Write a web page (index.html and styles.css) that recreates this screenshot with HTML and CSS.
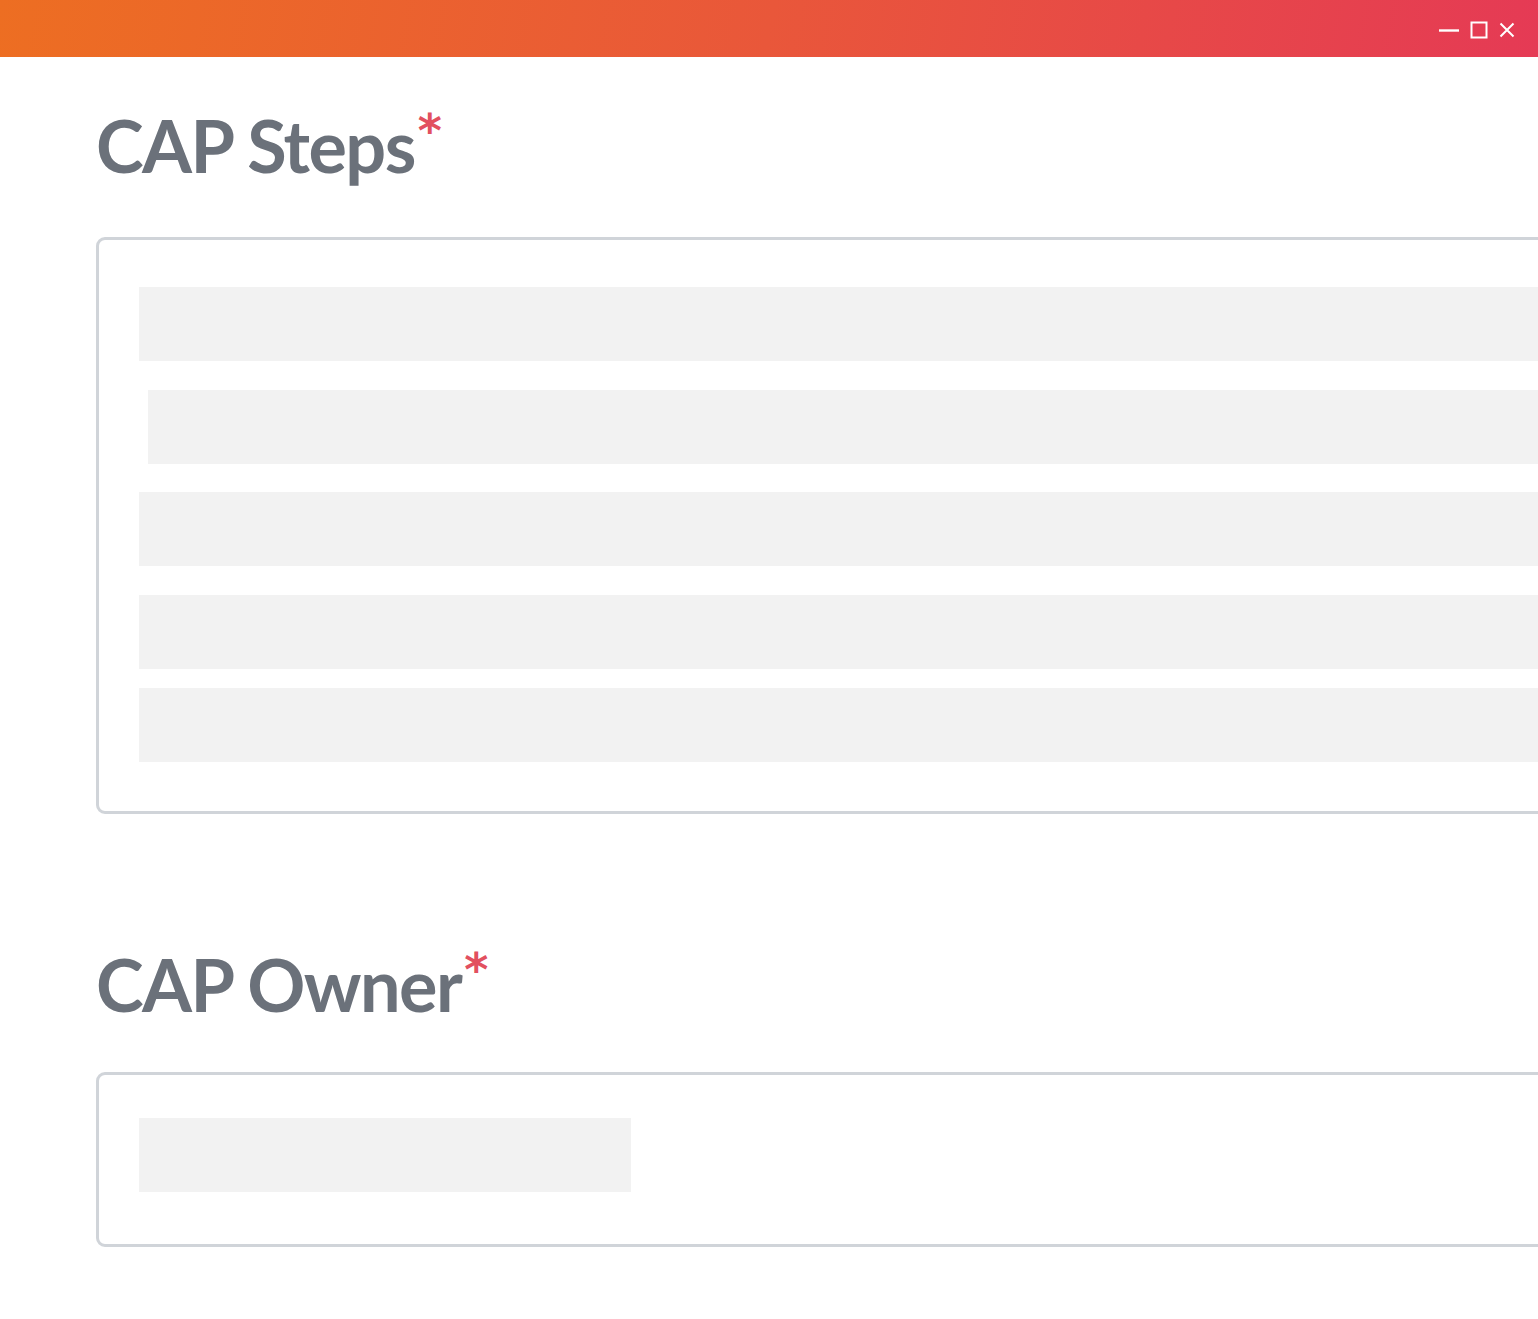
FILE: index.html
```html
<!DOCTYPE html>
<html>
<head>
<meta charset="utf-8">
<link rel="stylesheet" href="styles.css">
</head>
<body>
<header class="titlebar">
  <div class="controls">
    <svg class="ctl" width="22" height="22" viewBox="0 0 22 22"><path d="M1 11.5h20" stroke="#fff" stroke-width="2.4"/></svg>
    <svg class="ctl" width="20" height="20" viewBox="0 0 20 20"><rect x="2.5" y="2.5" width="15" height="15" fill="none" stroke="#fff" stroke-width="2"/></svg>
    <svg class="ctl" width="18" height="18" viewBox="0 0 18 18"><path d="M2.5 2.5l13 13M15.5 2.5l-13 13" stroke="#fff" stroke-width="2"/></svg>
  </div>
</header>
<main class="content">
  <section class="field">
    <h2 class="label">CAP Steps<span class="req">*</span></h2>
    <div class="box box-steps">
      <div class="bar"></div>
      <div class="bar bar-indent"></div>
      <div class="bar"></div>
      <div class="bar"></div>
      <div class="bar bar-last"></div>
    </div>
  </section>
  <section class="field field-owner">
    <h2 class="label">CAP Owner<span class="req">*</span></h2>
    <div class="box box-owner">
      <div class="bar bar-short"></div>
    </div>
  </section>
</main>
</body>
</html>
```
FILE: styles.css
```css
html, body {
  margin: 0;
  padding: 0;
  overflow: hidden;
  background: #fff;
  font-family: "Lato", "Liberation Sans", sans-serif;
}
.titlebar {
  height: 57px;
  background: linear-gradient(100deg, #ED6E22 0%, #E9573A 50%, #E53A55 100%);
  display: flex;
  justify-content: flex-end;
  align-items: center;
}
.controls {
  display: flex;
  align-items: center;
  gap: 9px;
  padding-right: 22px;
  padding-top: 2px;
}
.content {
  padding-left: 96px;
  width: 1600px;
}
.field {
  display: flex;
  flex-direction: column;
}
.label {
  margin: 0;
  padding-top: 46px;
  font-size: 72px;
  font-weight: 700;
  line-height: 84px;
  color: #6B717A;
  letter-spacing: -1.6px;
}
.req {
  color: #E2505F;
  font-family: "DejaVu Sans", sans-serif;
  font-size: 46px;
  font-weight: 700;
  line-height: 0;
  vertical-align: 26px;
  margin-left: 3px;
  letter-spacing: 0;
}
.box {
  margin-top: 50px;
  border: 3px solid #D0D4D9;
  border-radius: 9px;
  display: flex;
  flex-direction: column;
  padding: 47px 0 49px 40px;
}
.box-steps {
  gap: 28.5px;
}
.bar {
  height: 74px;
  background: #F2F2F2;
}
.bar-indent {
  margin-left: 9px;
}
.bar-last {
  margin-top: -9px;
}
.bar-short {
  width: 492px;
}
.box-owner {
  margin-top: 46px;
  padding-top: 43px;
  padding-bottom: 52px;
}
.field-owner .label {
  padding-top: 128px;
}
```
